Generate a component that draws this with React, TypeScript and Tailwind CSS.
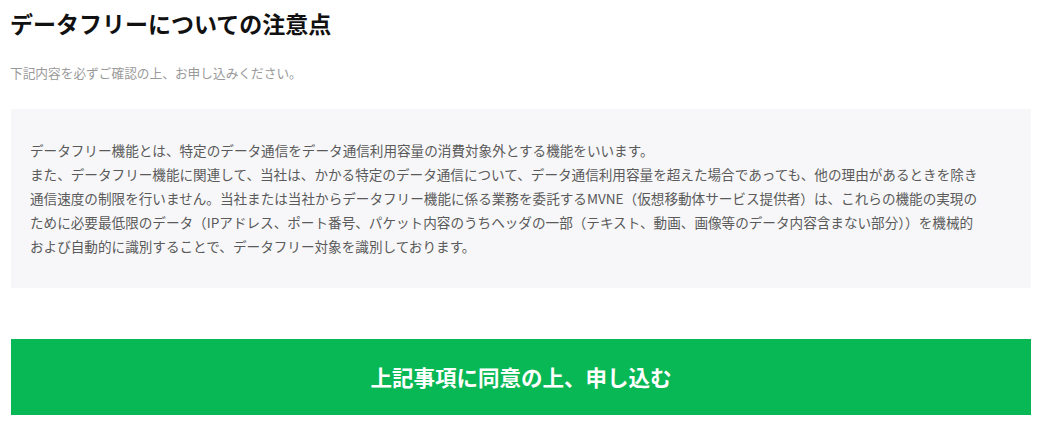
export default function App() {
  return (
    <div
      className="w-[1045px] h-[430px] bg-white pl-[11px] pr-[14px] pt-[7px]"
      style={{ fontFamily: '"Noto Sans CJK JP", "Noto Sans", sans-serif' }}
    >
      <h1 className="text-[23px] leading-[32px] font-bold text-[#111] -ml-[1px]">
        データフリーについての注意点
      </h1>
      <p className="mt-[24px] text-[12.7px] leading-[20px] text-[#9a9a9a] -ml-[1px]">
        下記内容を必ずご確認の上、お申し込みください。
      </p>
      <div className="mt-[26px] bg-[#f7f7f9] pl-[19px] pr-[10px] pt-[29px] pb-[30px] text-[13.6px] leading-[24px] text-[#5a5a5a] whitespace-nowrap">
        <p>データフリー機能とは、特定のデータ通信をデータ通信利用容量の消費対象外とする機能をいいます。</p>
        <p>
          また、データフリー機能に関連して、当社は、かかる特定のデータ通信について、データ通信利用容量を超えた場合であっても、他の理由があるときを除き
          <br />
          通信速度の制限を行いません。当社または当社からデータフリー機能に係る業務を委託するMVNE（仮想移動体サービス提供者）は、これらの機能の実現の
          <br />
          ために必要最低限のデータ（IPアドレス、ポート番号、パケット内容のうちヘッダの一部（テキスト、動画、画像等のデータ内容含まない部分））を機械的
          <br />
          および自動的に識別することで、データフリー対象を識別しております。
        </p>
      </div>
      <button className="mt-[51px] w-full h-[76px] bg-[#08b855] text-white text-[21.5px] font-bold flex items-center justify-center">
        上記事項に同意の上、申し込む
      </button>
    </div>
  );
}
